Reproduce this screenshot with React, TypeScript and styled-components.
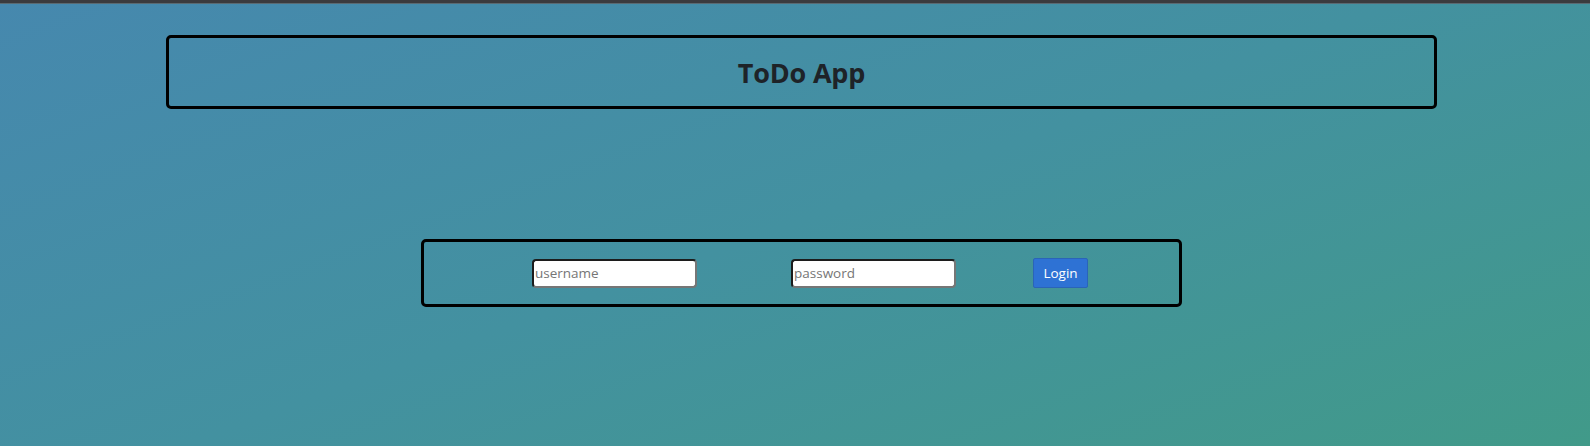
import React from "react";
import styled, { createGlobalStyle } from "styled-components";

const Global = createGlobalStyle`
  html, body { margin: 0; padding: 0; }
  body {
    width: 1590px;
    height: 446px;
    overflow: hidden;
    background: linear-gradient(160deg, #4688ae 0%, #4391a0 50%, #419a89 100%);
    font-family: "Open Sans", "Noto Sans", sans-serif;
  }
`;

const TopBar = styled.div`
  height: 4px;
  background: #3b3b3e;
  border-bottom: 1px solid #5a6a72;
  box-sizing: border-box;
`;

const Page = styled.div`
  padding-left: 13px;
  padding-top: 31px;
  display: flex;
  flex-direction: column;
  align-items: center;
`;

const Header = styled.header`
  box-sizing: border-box;
  width: 1271px;
  height: 74px;
  border: 3px solid #000;
  border-radius: 5px;
  display: flex;
  align-items: center;
  justify-content: center;
`;

const Title = styled.h1`
  margin: 0;
  font-size: 27px;
  font-weight: 700;
  color: #1e2328;
  letter-spacing: -0.2px;
`;

const LoginBox = styled.form`
  box-sizing: border-box;
  margin-top: 130px;
  width: 761px;
  height: 68px;
  border: 3px solid #000;
  border-radius: 5px;
  display: flex;
  align-items: center;
  padding-left: 108px;
`;

const Field = styled.input<{ $gap?: number }>`
  box-sizing: border-box;
  width: 165px;
  height: 29px;
  margin-left: ${(p) => p.$gap ?? 0}px;
  background: #fff;
  border-width: 2px;
  border-style: solid;
  border-color: #1c1c1c #767676 #767676 #1c1c1c;
  border-radius: 4px;
  padding: 0 1px;
  outline: none;
  font-family: "Open Sans", "Noto Sans", sans-serif;
  font-size: 13.5px;
  color: #222;
  &::placeholder { color: #767676; }
`;

const Button = styled.button`
  box-sizing: border-box;
  margin-left: 77px;
  width: 55px;
  height: 30px;
  background: #2e72d4;
  border: 1px solid #2a64b8;
  border-radius: 2px;
  color: #fff;
  font-family: "Open Sans", "Noto Sans", sans-serif;
  font-size: 13.5px;
  padding: 0;
`;

export default function App() {
  return (
    <>
      <Global />
      <TopBar />
      <Page>
        <Header>
          <Title>ToDo App</Title>
        </Header>
        <LoginBox onSubmit={(e) => e.preventDefault()}>
          <Field placeholder="username" />
          <Field $gap={94} type="password" placeholder="password" />
          <Button type="submit">Login</Button>
        </LoginBox>
      </Page>
    </>
  );
}
